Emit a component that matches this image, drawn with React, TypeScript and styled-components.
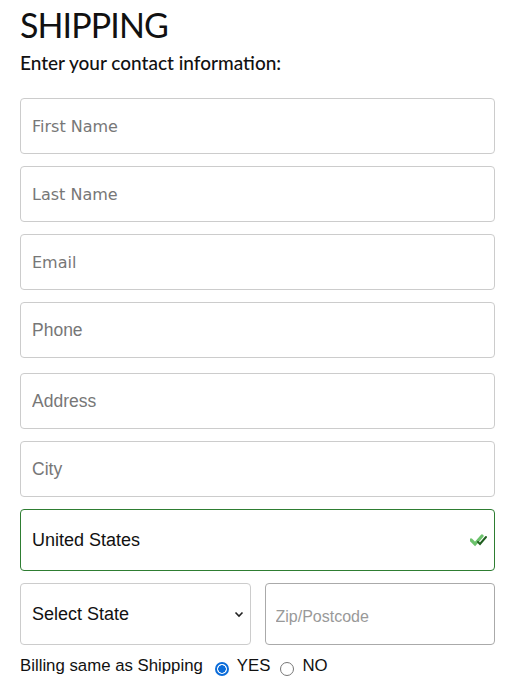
import styled, { createGlobalStyle } from "styled-components";

const GlobalStyle = createGlobalStyle`
  * { box-sizing: border-box; }
  body {
    margin: 0;
    background: #fff;
    font-family: "Liberation Sans", Arial, sans-serif;
  }
`;

const textFields = [
  { id: "first", placeholder: "First Name", font: "tahoma" },
  { id: "last", placeholder: "Last Name", font: "tahoma" },
  { id: "email", placeholder: "Email", font: "tahoma" },
  { id: "phone", placeholder: "Phone", font: "arial" },
];

const addressFields = [
  { id: "address", placeholder: "Address" },
  { id: "city", placeholder: "City" },
];

export default function App() {
  return (
    <Page>
      <GlobalStyle />
      <Title>SHIPPING</Title>
      <Subtitle>Enter your contact information:</Subtitle>
      <Form>
        <Group>
          {textFields.map((f) => (
            <Field key={f.id} placeholder={f.placeholder} $tahoma={f.font === "tahoma"} />
          ))}
        </Group>
        <Group>
          {addressFields.map((f) => (
            <Field key={f.id} placeholder={f.placeholder} />
          ))}
          <CountryBox>
            <span>United States</span>
            <CheckMark />
          </CountryBox>
        </Group>
        <SplitRow>
          <SelectBox>
            <span>Select State</span>
            <Chevron />
          </SelectBox>
          <ZipField placeholder="Zip/Postcode" />
        </SplitRow>
        <BillingRow>
          <span>Billing same as Shipping</span>
          <RadioOption>
            <Radio $checked />
            YES
          </RadioOption>
          <RadioOption>
            <Radio />
            NO
          </RadioOption>
        </BillingRow>
      </Form>
    </Page>
  );
}

function CheckMark() {
  return (
    <svg width="18" height="14" viewBox="0 0 18 14">
      <path d="M1 7 L5 11 L12 3" fill="none" stroke="#6cc26c" strokeWidth="3.2" strokeLinecap="round" />
      <path d="M8 9 L10 11 L16 4" fill="none" stroke="#1f5e1f" strokeWidth="2" strokeLinecap="round" />
    </svg>
  );
}

function Chevron() {
  return (
    <svg width="10" height="7" viewBox="0 0 10 7">
      <path d="M1.5 1.5 L5 5 L8.5 1.5" fill="none" stroke="#222" strokeWidth="1.6" />
    </svg>
  );
}

const Page = styled.div`
  width: 518px;
  padding: 6px 23px 0 20px;
`;

const Title = styled.h1`
  margin: 0;
  font-family: "Lato", sans-serif;
  font-weight: 400;
  font-size: 34px;
  line-height: 38px;
  letter-spacing: -0.9px;
  color: #111;
`;

const Subtitle = styled.h2`
  margin: 7px 0 0;
  font-family: "Lato", sans-serif;
  font-weight: 500;
  font-size: 19px;
  line-height: 24px;
  color: #111;
`;

const Form = styled.div`
  margin-top: 23px;
  display: flex;
  flex-direction: column;
  gap: 15px;
`;

const Group = styled.div`
  display: flex;
  flex-direction: column;
  gap: 12px;
`;

const Field = styled.input<{ $tahoma?: boolean }>`
  width: 100%;
  height: 56px;
  padding: 0 11px;
  border: 1px solid #ccc;
  border-radius: 4px;
  font-family: ${(p) => (p.$tahoma ? '"DejaVu Sans", Tahoma' : '"Liberation Sans", Arial')}, sans-serif;
  font-size: ${(p) => (p.$tahoma ? "16px" : "17.5px")};
  color: #333;
  &::placeholder {
    color: #777;
  }
`;

const CountryBox = styled.div`
  height: 62px;
  display: flex;
  align-items: center;
  justify-content: space-between;
  padding: 0 6px 0 11px;
  border: 1px solid #2e7d32;
  border-radius: 4px;
  font-size: 18px;
  color: #111;
`;

const SplitRow = styled.div`
  display: grid;
  grid-template-columns: 1fr 1fr;
  gap: 14px;
  margin-top: -3px;
`;

const SelectBox = styled.div`
  height: 62px;
  display: flex;
  align-items: center;
  justify-content: space-between;
  padding: 0 6px 0 11px;
  border: 1px solid #ccc;
  border-radius: 4px;
  font-size: 18px;
  color: #111;
`;

const ZipField = styled.input`
  width: 100%;
  height: 62px;
  padding: 6px 10px 0;
  border: 1px solid #aaa;
  border-radius: 4px;
  font-family: "Liberation Sans", Arial, sans-serif;
  font-size: 16px;
  &::placeholder {
    color: #999;
  }
`;

const BillingRow = styled.div`
  display: flex;
  align-items: center;
  gap: 10px;
  margin-top: -4px;
  font-size: 16.8px;
  color: #111;
`;

const RadioOption = styled.label`
  display: flex;
  align-items: center;
  gap: 8px;
  &:first-of-type {
    margin-left: 2px;
  }
`;

const Radio = styled.span<{ $checked?: boolean }>`
  width: 14px;
  height: 14px;
  margin-top: 5px;
  border-radius: 50%;
  border: ${(p) => (p.$checked ? "2px solid #0b6cd9" : "1.5px solid #777")};
  background: ${(p) => (p.$checked ? "radial-gradient(circle, #0b6cd9 0 3.5px, #fff 4px)" : "#fff")};
`;
